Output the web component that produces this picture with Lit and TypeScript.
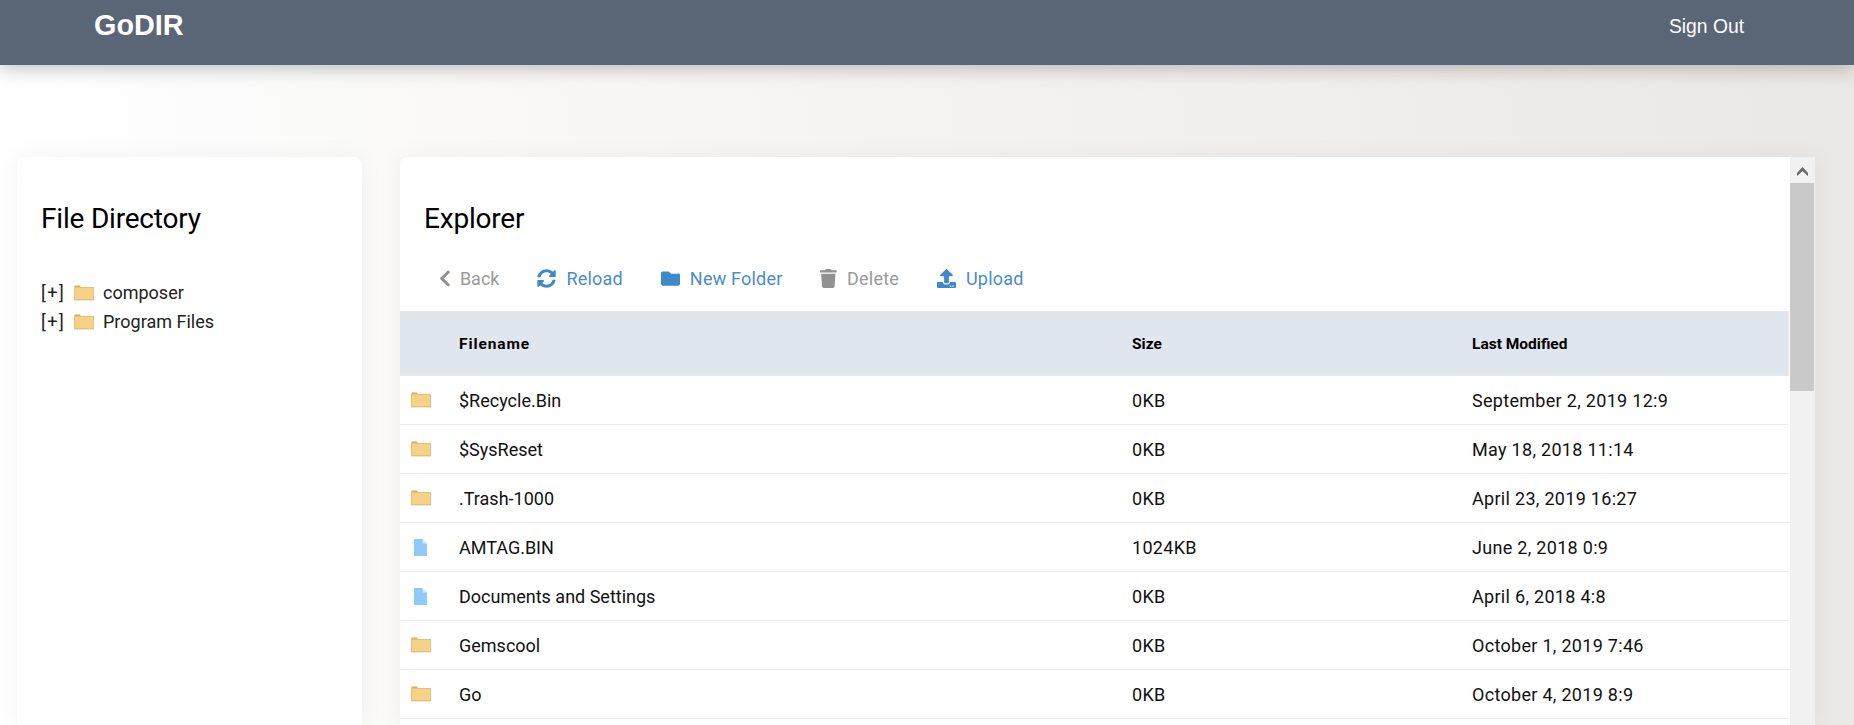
import { LitElement, html, css, svg } from "lit";
import { customElement } from "lit/decorators.js";

const ICONS: Record<string, { vb: string; d: string }> = {
  back: { vb: "0 0 320 512", d: "M34.52 239.03L228.87 44.69c9.37-9.37 24.57-9.37 33.94 0l22.67 22.67c9.36 9.36 9.37 24.52.04 33.9L131.49 256l154.02 154.75c9.34 9.38 9.32 24.54-.04 33.9l-22.67 22.67c-9.37 9.37-24.57 9.37-33.94 0L34.52 272.97c-9.37-9.37-9.37-24.57 0-33.94z" },
  reload: { vb: "0 0 512 512", d: "M370.72 133.28C339.458 104.008 298.888 87.962 255.848 88c-77.458.068-144.328 53.178-162.791 126.85-1.344 5.363-6.122 9.15-11.651 9.15H24.103c-7.498 0-13.194-6.807-11.807-14.176C33.933 94.924 134.813 8 256 8c66.448 0 126.791 26.136 171.315 68.685L463.03 40.97C478.149 25.851 504 36.559 504 57.941V192c0 13.255-10.745 24-24 24H345.941c-21.382 0-32.09-25.851-16.971-40.971l41.75-41.749zM32 296h134.059c21.382 0 32.09 25.851 16.971 40.971l-41.75 41.75c31.262 29.273 71.835 45.319 114.876 45.28 77.418-.07 144.315-53.144 162.787-126.849 1.344-5.363 6.122-9.15 11.651-9.15h57.304c7.498 0 13.194 6.807 11.807 14.176C478.067 417.076 377.187 504 256 504c-66.448 0-126.791-26.136-171.315-68.685L48.97 471.03C33.851 486.149 8 475.441 8 454.059V320c0-13.255 10.745-24 24-24z" },
  folder: { vb: "0 0 512 512", d: "M464 128H272l-64-64H48C21.49 64 0 85.49 0 112v288c0 26.51 21.49 48 48 48h416c26.51 0 48-21.49 48-48V160c0-26.51-21.49-48-48-48z" },
  trash: { vb: "0 0 448 512", d: "M432 32H312l-9.4-18.7A24 24 0 0 0 281.1 0H166.8a23.72 23.72 0 0 0-21.4 13.3L136 32H16A16 16 0 0 0 0 48v32a16 16 0 0 0 16 16h416a16 16 0 0 0 16-16V48a16 16 0 0 0-16-16zM53.2 467a48 48 0 0 0 47.9 45h245.8a48 48 0 0 0 47.9-45L416 128H32z" },
  upload: { vb: "0 0 512 512", d: "M296 384h-80c-13.3 0-24-10.7-24-24V192h-87.7c-17.8 0-26.7-21.5-14.1-34.1L242.3 5.7c7.5-7.5 19.8-7.5 27.3 0l152.2 152.2c12.6 12.6 3.7 34.1-14.1 34.1H320v168c0 13.3-10.7 24-24 24zm216-8v112c0 13.3-10.7 24-24 24H24c-13.3 0-24-10.7-24-24V376c0-13.3 10.7-24 24-24h136v8c0 30.9 25.1 56 56 56h80c30.9 0 56-25.1 56-56v-8h136c13.3 0 24 10.7 24 24zm-124 88c0-11-9-20-20-20s-20 9-20 20 9 20 20 20 20-9 20-20zm64 0c0-11-9-20-20-20s-20 9-20 20 9 20 20 20 20-9 20-20z" },
};

const folderIcon = html`<svg class="ficon" viewBox="0 0 20 16" width="20" height="16" aria-hidden="true">
  <path d="M0.5 2.5V0.5H6L7 2.5Z" fill="#d9ad62"/>
  <rect x="0.5" y="2.5" width="19" height="12" fill="#f6d286" stroke="#e3c07c"/>
  <rect x="0" y="15" width="20" height="1" fill="#efe6d4"/>
</svg>`;
const fileIcon = html`<svg class="ficon" viewBox="0 0 13 17" width="13" height="17" aria-hidden="true">
  <path d="M0 0H8.5L13 4.5V17H0Z" fill="#90caf9"/>
  <path d="M8.5 0L13 4.5H8.5Z" fill="#d3eafc"/>
</svg>`;

type Row = [string, string, string, string];
const ROWS: Row[] = [
  ["d", "$Recycle.Bin", "0KB", "September 2, 2019 12:9"],
  ["d", "$SysReset", "0KB", "May 18, 2018 11:14"],
  ["d", ".Trash-1000", "0KB", "April 23, 2019 16:27"],
  ["f", "AMTAG.BIN", "1024KB", "June 2, 2018 0:9"],
  ["f", "Documents and Settings", "0KB", "April 6, 2018 4:8"],
  ["d", "Gemscool", "0KB", "October 1, 2019 7:46"],
  ["d", "Go", "0KB", "October 4, 2019 8:9"],
];

const ACTIONS: [string, string, boolean][] = [
  ["back", "Back", true],
  ["reload", "Reload", false],
  ["folder", "New Folder", false],
  ["trash", "Delete", true],
  ["upload", "Upload", false],
];

@customElement("app-root")
export class AppRoot extends LitElement {
  static styles = css`
    :host {
      display: flex;
      flex-direction: column;
      width: 1854px;
      height: 725px;
      overflow: hidden;
      background: linear-gradient(90deg, #ffffff 0%, #ebe7e4 100%);
      font-family: Roboto, "Noto Sans", sans-serif;
      font-size: 18px;
      color: #111;
    }
    .bar {
      flex: none;
      height: 65px;
      background: #5a6676;
      box-shadow: 0 3px 18px rgba(0, 0, 0, 0.26);
      display: flex;
      align-items: flex-start;
      justify-content: space-between;
      padding: 0 110px 0 94px;
      color: #fff;
      font-family: "Liberation Sans", Arial, sans-serif;
      position: relative;
    }
    .brand {
      font-size: 28.8px;
      font-weight: 700;
      line-height: 33px;
      padding-top: 9px;
    }
    .out {
      font-size: 19.3px;
      line-height: 24px;
      padding-top: 15px;
    }
    .main {
      flex: 1;
      min-height: 0;
      display: flex;
      align-items: stretch;
      gap: 38px;
      padding: 92px 39px 0 17px;
    }
    .card {
      background: #fff;
      border-radius: 8px 8px 0 0;
      box-shadow: 0 0 24px rgba(0, 0, 0, 0.05);
    }
    .side {
      flex: none;
      width: 345px;
      padding: 45px 24px 0;
      box-sizing: border-box;
    }
    h3 {
      margin: 0;
      font-size: 28px;
      font-weight: 400;
      line-height: 34px;
      letter-spacing: -0.2px;
      color: #000;
    }
    .tree {
      margin-top: 42px;
      display: flex;
      flex-direction: column;
    }
    .node {
      height: 29px;
      display: flex;
      align-items: center;
      color: #222;
    }
    .toggle {
      width: 33px;
      flex: none;
      letter-spacing: 1.5px;
    }
    .node .ficon {
      flex: none;
      margin-right: 9px;
    }
    .explorer {
      flex: 1;
      min-width: 0;
      display: flex;
      overflow: hidden;
      border-radius: 8px 0 0 0;
    }
    .pane {
      flex: 1;
      min-width: 0;
      padding-top: 45px;
    }
    .pane h3 {
      padding-left: 24px;
    }
    .tools {
      display: flex;
      align-items: center;
      gap: 38px;
      height: 44px;
      margin-top: 20px;
      padding-left: 39px;
      margin-bottom: 11px;
    }
    .tool {
      display: flex;
      align-items: center;
      gap: 10px;
      color: #4a8ccc;
      letter-spacing: 0.2px;
    }
    .tool:first-child {
      gap: 9px;
      letter-spacing: 0;
    }
    .tool svg {
      fill: #3f88ca;
      height: 19px;
      flex: none;
    }
    .tool.off {
      color: #9a9a9a;
    }
    .tool.off svg {
      fill: #929292;
    }
    table {
      width: calc(100% - 1px);
      border-collapse: collapse;
      table-layout: fixed;
      font-size: 18px;
    }
    th {
      height: 64px;
      padding: 0 10px;
      background: #e0e6ee;
      border-top: 1px solid #e4e8ed;
      border-bottom: 1px solid #e4e8ed;
      text-align: left;
      font-size: 15.5px;
      font-weight: 700;
      color: #000;
      box-sizing: border-box;
    }
    th.wide {
      letter-spacing: 0.9px;
    }
    td {
      height: 49px;
      padding: 0 10px;
      border-bottom: 1px solid #eceeef;
      box-sizing: border-box;
      color: #111;
    }
    td.num {
      letter-spacing: 0.3px;
    }
    td.ic {
      padding: 0 0 0 11px;
      line-height: 0;
    }
    td.ic.file {
      padding-left: 14px;
    }
    .scroll {
      flex: none;
      width: 25px;
      background: #f1f1f1;
      display: flex;
      flex-direction: column;
    }
    .arrow {
      height: 26px;
      padding-top: 3px;
      box-sizing: border-box;
      display: flex;
      align-items: center;
      justify-content: center;
    }
    .thumb {
      height: 208px;
      width: 24px;
      background: #c9c9c9;
    }
  `;

  render() {
    return html`
      <header class="bar">
        <div class="brand">GoDIR</div>
        <div class="out">Sign Out</div>
      </header>
      <div class="main">
        <aside class="card side">
          <h3>File Directory</h3>
          <div class="tree">
            ${["composer", "Program Files"].map(
              (n) => html`<div class="node"><span class="toggle">[+]</span>${folderIcon}<span>${n}</span></div>`
            )}
          </div>
        </aside>
        <section class="card explorer">
          <div class="pane">
            <h3>Explorer</h3>
            <div class="tools">
              ${ACTIONS.map(([ic, label, off]) => {
                const i = ICONS[ic];
                return html`<div class="tool ${off ? "off" : ""}">
                  <svg viewBox=${i.vb} aria-hidden="true">${svg`<path d=${i.d}></path>`}</svg>
                  <span>${label}</span>
                </div>`;
              })}
            </div>
            <table>
              <colgroup>
                <col style="width:49px" />
                <col style="width:673px" />
                <col style="width:340px" />
                <col />
              </colgroup>
              <thead>
                <tr><th></th><th class="wide">Filename</th><th>Size</th><th>Last Modified</th></tr>
              </thead>
              <tbody>
                ${ROWS.map(
                  ([t, n, s, m]) => html`<tr>
                    <td class="ic ${t === "f" ? "file" : ""}">${t === "f" ? fileIcon : folderIcon}</td>
                    <td>${n}</td>
                    <td class="num">${s}</td>
                    <td class="num">${m}</td>
                  </tr>`
                )}
              </tbody>
            </table>
          </div>
          <div class="scroll">
            <div class="arrow">
              <svg viewBox="0 0 11 9" width="11" height="9" aria-hidden="true"><path d="M5.5 0L11 6V9L5.5 4L0 9V6Z" fill="#666"/></svg>
            </div>
            <div class="thumb"></div>
          </div>
        </section>
      </div>
    `;
  }
}
